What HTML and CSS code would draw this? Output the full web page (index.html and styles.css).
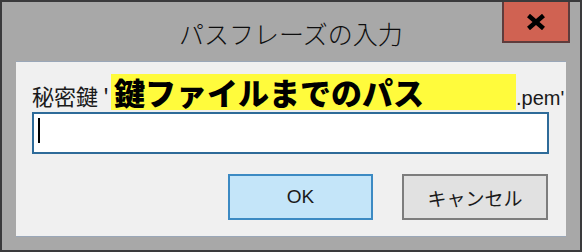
FILE: index.html
```html
<!DOCTYPE html>
<html>
	<head>
		<title>パスフレーズの入力</title><meta charset="utf-8">
		<link rel="stylesheet" href="styles.css">
	</head>
	<body>
		<div class="window">
			<div class="titlebar">
				<span></span>
				<h1 class="title">パスフレーズの入力</h1>
				<button class="close" title="閉じる">
					<svg width="20" height="16" viewBox="0 0 20 16">
						<path d="M2.5 1.5 L17.5 14.5 M17.5 1.5 L2.5 14.5" stroke="#000" stroke-width="4.5" fill="none"/>
					</svg>
				</button>
			</div>
			<div class="panel">
				<p class="prompt">
					<span class="label">秘密鍵 '</span><span class="mark">鍵ファイルまでのパス</span><span class="ext">.pem'</span>
				</p>
				<div class="field"><span class="caret"></span></div>
				<div class="actions">
					<button class="btn ok">OK</button>
					<button class="btn cancel">キャンセル</button>
				</div>
			</div>
		</div>
	</body>
</html>
```

FILE: styles.css
```css
body { margin: 0; }

.window {
	width: 582px;
	height: 252px;
	box-sizing: border-box;
	border: 2px solid #3a3a3c;
	background: #a8a8a8;
	display: flex;
	flex-direction: column;
	font-family: "Liberation Sans", "Noto Sans CJK JP", sans-serif;
	color: #1a1a1a;
}

.titlebar {
	height: 59px;
	display: grid;
	grid-template-columns: 1fr auto 1fr;
	align-items: start;
}
.title {
	margin: 19px 0 0;
	font-family: "Noto Sans CJK JP", sans-serif;
	font-size: 25px;
	font-weight: 300;
	line-height: 1;
	color: #0e0e0e;
}
.close {
	justify-self: end;
	margin-right: 10px;
	width: 68px;
	height: 41px;
	box-sizing: border-box;
	border: 2px solid #5e3c3c;
	border-top: none;
	background: #d06252;
	padding: 0;
	display: flex;
	align-items: center;
	justify-content: center;
}

.panel {
	flex: 1;
	margin: 0 14px 13px;
	border-top: 1px solid #9aa7b8;
	border-bottom: 1px solid #9aa7b8;
	background: #f0f0f0;
	overflow: hidden;
}

.prompt {
	margin: 12px 0 2px 16px;
	height: 36px;
	display: flex;
	align-items: baseline;
	white-space: nowrap;
}
.label {
	font-family: "Noto Sans CJK JP", sans-serif;
	font-size: 22px;
	margin-right: 2px;
}
.mark {
	width: 405px;
	box-sizing: border-box;
	padding-left: 3px;
	background: #fffb3c;
	font-family: "Noto Sans CJK JP", sans-serif;
	font-size: 31px;
	font-weight: 900;
	line-height: 36px;
	color: #000;
}
.ext { font-size: 20px; }

.field {
	margin-left: 16px;
	width: 517px;
	height: 42px;
	box-sizing: border-box;
	border: 2px solid #2e6b99;
	background: #fff;
	padding: 4px 0 0 4px;
}
.caret {
	display: block;
	width: 2px;
	height: 25px;
	background: #000;
}

.actions {
	margin-top: 20px;
	padding-right: 18px;
	display: flex;
	justify-content: flex-end;
	gap: 29px;
}
.btn {
	height: 46px;
	box-sizing: border-box;
	border: 2px solid;
	font-family: "Liberation Sans", "Noto Sans CJK JP", sans-serif;
	font-size: 19px;
	color: #1a1a1a;
	padding: 0;
}
.ok { width: 145px; border-color: #3c8ac3; background: #c4e5f9; }
.cancel { width: 146px; border-color: #7d7d7d; background: #e1e1e1; }
```
